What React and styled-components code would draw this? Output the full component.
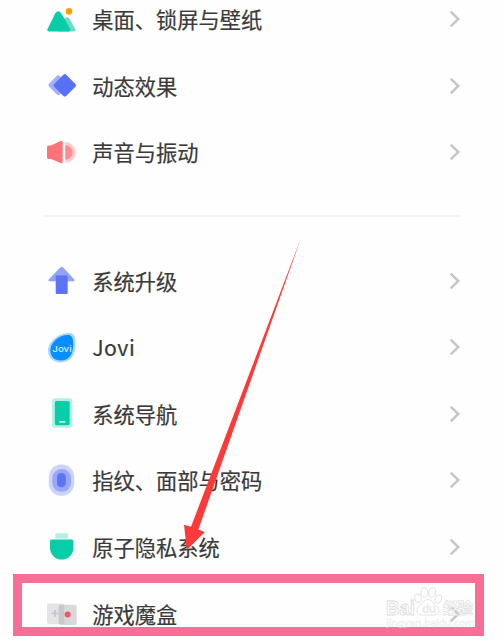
import * as React from 'react';
import styled, { createGlobalStyle } from 'styled-components';

const GlobalStyle = createGlobalStyle`
  * {
    box-sizing: border-box;
  }
  body {
    margin: 0;
    background-color: #fefefe;
    font-family: 'Noto Sans CJK SC', sans-serif;
  }
`;

const Screen = styled.div`
  position: relative;
  width: 504px;
  height: 642px;
  overflow: hidden;
  display: flex;
  flex-direction: column;
`;

const Group = styled.div`
  display: flex;
  flex-direction: column;
  padding: 0 43.5px 0 46px;
  flex-shrink: 0;
  ${(props) => (props.$clipped ? 'margin-top: -13.7px;' : '')}
`;

const Divider = styled.div`
  flex-shrink: 0;
  height: 2px;
  margin: 29px 44px 30.7px;
  background-color: #f5f5f5;
`;

const Row = styled.div`
  display: flex;
  align-items: center;
  height: 66.6px;
`;

const Icon = styled.svg`
  width: 30px;
  height: 32px;
  flex-shrink: 0;
  overflow: visible;
`;

const Label = styled.div`
  flex: 1;
  margin: -1px 0 0 16.2px;
  font-size: 21.25px;
  line-height: 32px;
  font-weight: 400;
  color: #3a3a3a;
  -webkit-text-stroke: 0.2px #3a3a3a;
  white-space: nowrap;
  ${(props) => (props.$latin ? 'letter-spacing: 0.5px;' : '')}
`;

const Chevron = styled.svg`
  width: 12px;
  height: 18px;
  flex-shrink: 0;
  margin-top: -1px;
`;

const Highlight = styled.div`
  position: absolute;
  left: 13px;
  top: 574px;
  width: 470.5px;
  height: 62px;
  border: 9px solid #f96e96;
`;

const Pointer = styled.svg`
  position: absolute;
  left: 0;
  top: 0;
  width: 504px;
  height: 642px;
`;

const Watermark = styled.svg`
  position: absolute;
  left: 384px;
  top: 584px;
  width: 96px;
  height: 48px;
  overflow: visible;
`;

const items = [
  [
    {
      title: '桌面、锁屏与壁纸',
      icon: (
        <>
          <path d="M12 27.4L17.6 15.5Q21.2 11.2 24 15.4L29.3 25Q30.3 27.4 28 27.4Z" fill="#6ddcc6" />
          <path d="M3.3 27.4Q0.3 27.4 1.8 24.4L9.2 9.6Q12.3 5 15.4 9.6L24 24.6Q25.4 27.4 22.6 27.4Z" fill="#07cda9" />
          <circle cx="23" cy="7.4" r="3.3" fill="#ff9f0a" />
        </>
      ),
    },
    {
      title: '动态效果',
      icon: (
        <>
          <rect x="4.7" y="7.5" width="15.2" height="15.2" rx="2" transform="rotate(45 12.3 15.1)" fill="#a3b0fa" />
          <rect x="10.3" y="6.8" width="17" height="17" rx="2" transform="rotate(45 18.8 15.3)" fill="#5872f5" />
        </>
      ),
    },
    {
      title: '声音与振动',
      icon: (
        <>
          <path d="M19.3 5.1A10.4 10.4 0 0 1 19.3 25.9Z" fill="#ffcacc" />
          <path d="M19.3 8.3A7.2 7.2 0 0 1 19.3 22.7Z" fill="#ff8c90" />
          <path d="M2.5 8.5H5L14.7 4Q16.7 3.3 16.7 5.3V24.8Q16.7 26.8 14.7 26L5 21.9H2.5Q1 21.9 1 20.4V10Q1 8.5 2.5 8.5Z" fill="#ff7379" />
        </>
      ),
    },
  ],
  [
    {
      title: '系统升级',
      icon: (
        <>
          <path d="M14.2 2.5Q15.7 1.4 17.2 2.5L28 14.3Q29.3 16.3 27 16.3H4Q1.5 16.3 2.9 14.3Z" fill="#92a2f9" />
          <rect x="9.7" y="10.5" width="12" height="18.6" rx="1.3" fill="#5b73f4" />
        </>
      ),
    },
    {
      title: 'Jovi',
      latin: true,
      icon: (
        <>
          <path d="M24.5 1C29 1.6 29.6 7 29.5 13C29.4 24 24 30.4 14.5 30.4C7 30.4 2 25.5 2 18.5C2 9 14 -0.2 24.5 1Z" fill="#a9d7fd" />
          <path d="M22.5 3.1C26.6 3.4 27.3 7.5 27.2 13.5C27 23 22.6 28.4 14.7 28.4C8.4 28.4 4.3 24.3 4.3 18.4C4.3 10.5 13.8 2.4 22.5 3.1Z" fill="#0a8dff" />
          <text
            x="6.3"
            y="20"
            textLength="19.3"
            lengthAdjust="spacingAndGlyphs"
            fontFamily="Inter, sans-serif"
            fontSize="8"
            fontWeight="500"
            fill="#d9efff"
          >
            Jovi
          </text>
        </>
      ),
    },
    {
      title: '系统导航',
      icon: (
        <>
          <rect x="6" y="0.2" width="20.3" height="29.6" rx="3" fill="#b5f0e4" />
          <rect x="8.9" y="3" width="14.8" height="24.2" rx="1.6" fill="#07cda9" />
          <rect x="13.2" y="23" width="6.2" height="1.7" rx="0.8" fill="#c8f5ec" />
        </>
      ),
    },
    {
      title: '指纹、面部与密码',
      icon: (
        <>
          <rect x="2.8" y="-0.4" width="25.4" height="31.2" rx="12.2" fill="#ccd4fd" />
          <rect x="6.3" y="4" width="18.7" height="22.8" rx="9" fill="#98a7fa" />
          <rect x="11" y="7.9" width="8.8" height="14.4" rx="4.4" fill="#5b73f4" />
        </>
      ),
    },
    {
      title: '原子隐私系统',
      icon: (
        <>
          <rect x="9.3" y="2.3" width="12.8" height="5.4" rx="1" fill="#b5f0e4" />
          <path d="M5.5 8.6H25.8Q27.4 8.6 27.4 10.2V16.8A11.7 11.8 0 0 1 4 16.8V10.2Q4 8.6 5.5 8.6Z" fill="#07cda9" />
        </>
      ),
    },
    {
      title: '游戏魔盒',
      icon: (
        <>
          <rect x="1" y="5.5" width="17.3" height="20.4" rx="2" fill="#e4e4e4" />
          <rect x="12.7" y="6.8" width="18" height="20.2" rx="2" fill="#d9d9d9" />
          <path d="M12.7 8.8Q12.7 6.8 14.7 6.8H18.3V25.9H12.7Z" fill="#c8c8c8" />
          <path d="M9 12V18.8M5.6 15.4H12.4" stroke="#c5c5d0" strokeWidth="1.9" />
          <circle cx="21.7" cy="16.6" r="3" fill="#fb5460" />
        </>
      ),
    },
  ],
];

const MenuRow = ({ item }) => (
  <Row>
    <Icon viewBox="0 0 30 32">{item.icon}</Icon>
    <Label $latin={item.latin}>{item.title}</Label>
    <Chevron viewBox="0 0 12 18" fill="none">
      <path d="M1.7 1.7L9.3 9L1.7 16.3" stroke="#c6c6c6" strokeWidth="2.5" />
    </Chevron>
  </Row>
);

const App = () => {
  return (
    <Screen>
      <GlobalStyle />
      {items.map((group, index) => (
        <React.Fragment key={index}>
          {index > 0 ? <Divider /> : null}
          <Group $clipped={index === 0}>
            {group.map((item) => (
              <MenuRow key={item.title} item={item} />
            ))}
          </Group>
        </React.Fragment>
      ))}
      <Highlight />
      <Watermark viewBox="0 0 96 48">
        <g
          fill="#ffffff"
          fillOpacity="0.6"
          stroke="#dcdcdc"
          strokeWidth="0.8"
          fontFamily="'Liberation Sans', 'Noto Sans CJK SC', sans-serif"
          fontWeight="700"
        >
          <text x="2" y="31" fontSize="20" textLength="29" lengthAdjust="spacingAndGlyphs">Bai</text>
          <ellipse cx="34" cy="14.3" rx="3.2" ry="4.4" transform="rotate(-15 34 14.3)" />
          <ellipse cx="40.3" cy="8.3" rx="3.3" ry="4.8" />
          <ellipse cx="48.2" cy="8.5" rx="3.3" ry="4.8" transform="rotate(12 48.2 8.5)" />
          <ellipse cx="54.3" cy="15" rx="3.2" ry="4.3" transform="rotate(20 54.3 15)" />
          <path d="M44 15.5C48 15.5 49.5 19.5 52.5 22C57 25.5 55 31 50 31H38C32.5 31 31.5 25.5 35.5 22C38.5 19.5 40 15.5 44 15.5Z" />
          <text x="38" y="29" fontSize="12" textLength="14" fill="#d9d9d9" stroke="none">du</text>
          <text x="59" y="30" fontSize="15.5" textLength="30" strokeWidth="0.6">经验</text>
        </g>
        <text
          x="2.5"
          y="41.5"
          fontSize="9.5"
          textLength="88"
          lengthAdjust="spacingAndGlyphs"
          fontFamily="'Liberation Sans', sans-serif"
          fill="#ffffff"
          fillOpacity="0.45"
          stroke="#d4d4d4"
          strokeOpacity="0.5"
          strokeWidth="0.4"
        >
          jingyan.baidu.com
        </text>
      </Watermark>
      <Pointer viewBox="0 0 504 642">
        <path d="M301 238L191 526.8L184 524.8L186.8 550L204.8 532L198.4 529.5Z" fill="#fc3a3a" />
      </Pointer>
    </Screen>
  );
};

export default App;
